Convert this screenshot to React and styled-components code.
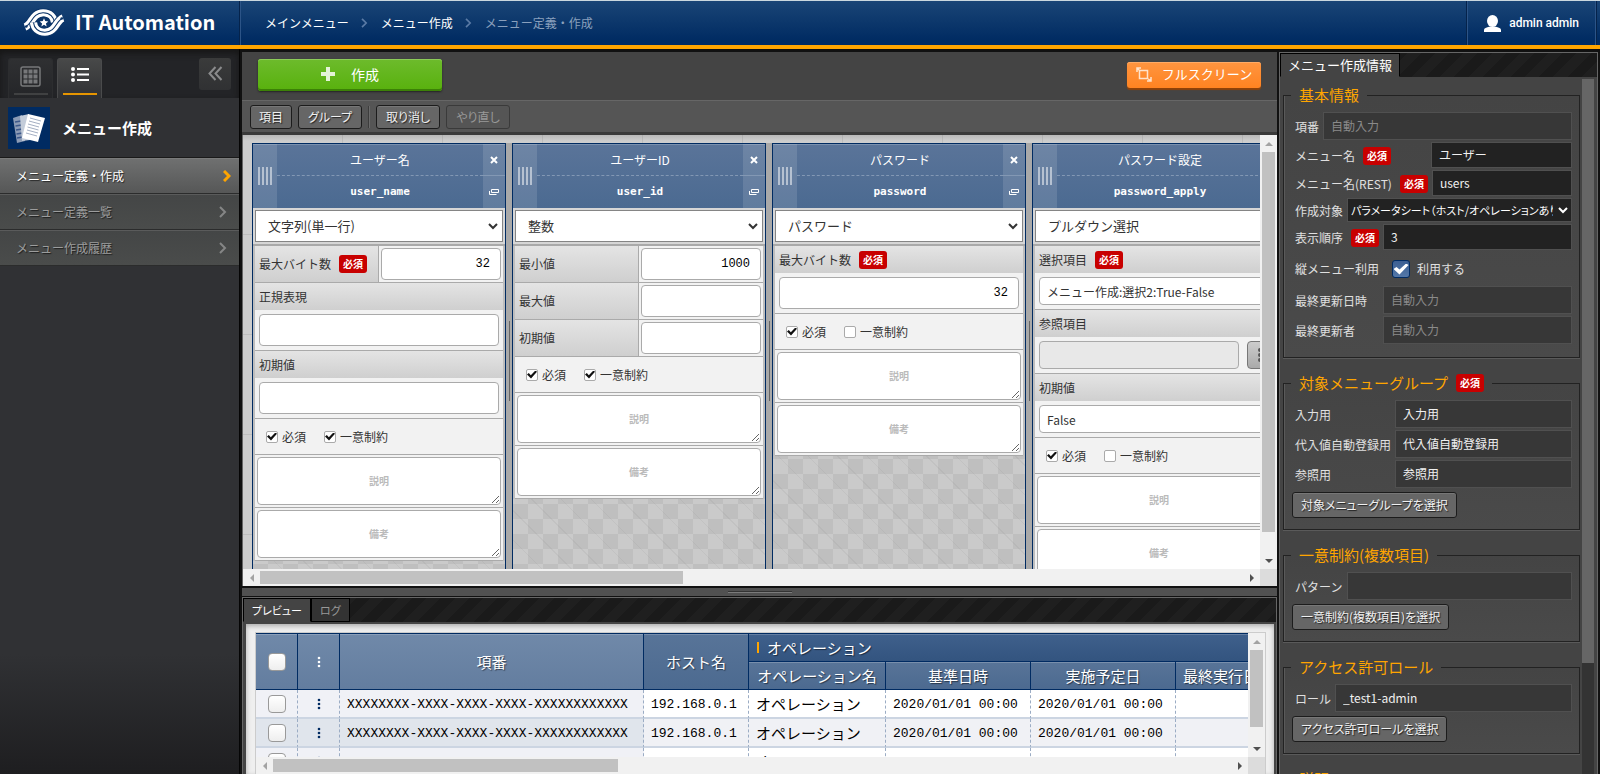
import React from "react";
import styled, { createGlobalStyle, css } from "styled-components";

const ui = `"Noto Sans CJK JP", "Noto Sans", sans-serif`;
const mono = `"Liberation Mono", "Noto Sans CJK JP", monospace`;
const navy = "#002b62";

const GlobalStyle = createGlobalStyle`
  *, *::before, *::after { box-sizing: border-box; }
  html, body, #root { height: 100%; }
  body { margin: 0; overflow: hidden; background: #111; font-family: ${ui}; font-size: 12px; line-height: 16px; color: #333; }
  button, input, select, textarea { font: inherit; color: inherit; margin: 0; border-radius: 0; }
  button { padding: 0; }
  a { color: inherit; text-decoration: none; }
  ul, ol { margin: 0; padding: 0; list-style: none; }
  h1, h2 { margin: 0; font: inherit; }
  svg { display: block; flex: none; }
`;

const Page = styled.div`
  display: flex;
  flex-direction: column;
  height: 100vh;
`;

/* ---------- header ---------- */
const Header = styled.header`
  display: flex;
  flex: none;
  height: 49px;
  border-top: 1px solid #cbd8df;
  border-bottom: 4px solid #ffa500;
  background: linear-gradient(#1a4576, ${navy} 90%);
  color: #fff;
`;
const Brand = styled.h1`
  display: flex;
  align-items: center;
  gap: 10px;
  width: 240px;
  padding: 0 0 2px 23px;
  border-right: 1px solid #05234b;
  font-size: 20px;
  line-height: 28px;
  font-weight: 700;
  white-space: nowrap;
`;
const Crumbs = styled.ol`
  display: flex;
  flex: 1;
  align-items: center;
  gap: 13px;
  padding-left: 24px;
  border-left: 1px solid #2c5487;
  li { display: flex; align-items: center; gap: 12px; }
  li:last-child { color: #8aa0bd; }
`;
const UserArea = styled.div`
  display: flex;
  align-items: center;
  gap: 8px;
  padding: 0 16px;
  margin-right: 4px;
  border-left: 1px solid #2c5487;
  border-right: 1px solid #2c5487;
  box-shadow: -1px 0 #05234b, 1px 0 #05234b;
  font: 500 12px/16px Roboto, sans-serif;
`;
const Body = styled.div`
  display: flex;
  flex: 1;
  min-height: 0;
`;

/* ---------- sidebar ---------- */
const Sidebar = styled.aside`
  flex: none;
  width: 240px;
  background: linear-gradient(#303134 calc(100% - 120px), #1e1e20);
  border-right: 1px solid #050505;
`;
const SideTabs = styled.div`
  display: flex;
  align-items: flex-end;
  gap: 4px;
  height: 49px;
  padding: 0 8px;
  background: #232427;
  box-shadow: inset 0 4px 6px #161616;
`;
const SideTab = styled.button`
  display: flex;
  flex-direction: column;
  align-items: center;
  justify-content: space-between;
  width: 45px;
  height: 40px;
  padding: 7px 0 3px;
  border: 1px solid ${(p) => (p.$on ? "#4a4b4c" : "#2c2d2f")};
  border-bottom: 0;
  border-radius: 3px 3px 0 0;
  background: ${(p) => (p.$on ? "linear-gradient(#484949, #303134)" : "linear-gradient(#2f3032, #242528)")};
  &::after {
    content: "";
    width: 34px;
    height: 2px;
    background: ${(p) => (p.$on ? "#e69500" : "#404142")};
  }
`;
const Collapse = styled.button`
  display: grid;
  place-items: center;
  align-self: center;
  width: 32px;
  height: 32px;
  margin-left: auto;
  border: 0;
  border-radius: 3px;
  background: linear-gradient(#3a3b3b, #303133);
`;
const SideHead = styled.h2`
  display: flex;
  align-items: center;
  gap: 12px;
  height: 60px;
  padding-left: 8px;
  border-bottom: 1px solid #1a1a1a;
  color: #fff;
  font-size: 15px;
  font-weight: 700;
`;
const SideIcon = styled.span`
  display: grid;
  place-items: center;
  width: 42px;
  height: 42px;
  background: ${navy};
`;
const SideLink = styled.a`
  display: flex;
  align-items: center;
  justify-content: space-between;
  height: 36px;
  padding: 0 8px 0 16px;
  border-top: 1px solid ${(p) => (p.$on ? "#7a7b7b" : "#5a5b5b")};
  border-bottom: 1px solid #2b2c2c;
  background: ${(p) => (p.$on ? "linear-gradient(#6f7070, #565757)" : "linear-gradient(#444646, #4a4c4b)")};
  color: ${(p) => (p.$on ? "#fff" : "#9c9d9d")};
  text-shadow: 1px 1px 1px rgba(0, 0, 0, 0.6);
  svg { margin-right: ${(p) => (p.$on ? 0 : 4)}px; }
`;

/* ---------- centre ---------- */
const Main = styled.main`
  display: flex;
  flex: 1;
  flex-direction: column;
  min-width: 0;
  margin: 3px 2px 0;
  background: #444;
`;
const TopBar = styled.div`
  display: flex;
  align-items: center;
  justify-content: space-between;
  flex: none;
  height: 48px;
  padding: 0 16px 2px;
`;
const BigButton = styled.button`
  display: flex;
  align-items: center;
  justify-content: center;
  padding-bottom: 2px;
  border: 0;
  border-radius: 3px;
  color: #fff;
  ${(p) =>
    p.$accent === "green"
      ? css`
          gap: 16px;
          width: 184px;
          height: 32px;
          font-size: 14px;
          background: linear-gradient(#6dbb2c, #58b10d);
          box-shadow: inset 0 1px #8ccc58, inset 0 -2px #3c8107, 0 1px 2px #222;
        `
      : css`
          gap: 10px;
          width: 134px;
          height: 26px;
          font-size: 13px;
          background: linear-gradient(#ff9540, #ff8321);
          box-shadow: inset 0 1px #ffab66, 0 2px 1px #8f4208;
        `}
`;
const Toolbar = styled.div`
  display: flex;
  flex: none;
  align-items: center;
  gap: 6px;
  height: 35px;
  padding: 0 8px;
  border-top: 1px solid #666;
  border-bottom: 3px solid #3a3a3a;
  background: #555;
`;
const GrayButton = styled.button`
  height: ${(p) => (p.$tall ? 26 : 24)}px;
  min-width: ${(p) => (p.$wide ? 64 : 42)}px;
  padding: 0 8px;
  border: 1px solid #1c1c1c;
  border-radius: 3px;
  background: #666;
  box-shadow: inset 0 1px #777;
  color: #f0f0f0;
  font-size: 12px;
  line-height: 16px;
  white-space: nowrap;
  font-feature-settings: "palt";
  text-shadow: 1px 1px 1px #222;
  &:disabled { background: #555; border-color: #3a3a3a; box-shadow: none; color: #999; text-shadow: none; }
`;
const ToolSep = styled.span`
  width: 2px;
  height: 22px;
  border-left: 1px solid #3c3c3c;
  border-right: 1px solid #6a6a6a;
`;

/* ---------- scroll bars ---------- */
const Track = styled.div`
  display: flex;
  align-items: center;
  flex-direction: ${(p) => (p.$vertical ? "column" : "row")};
  min-width: 0;
  min-height: 0;
  background: #f1f1f1;
`;
const Arrow = styled.span`
  display: grid;
  place-items: center;
  flex: none;
  width: 17px;
  height: 17px;
`;
const Rail = styled.span`
  display: flex;
  flex-direction: ${(p) => (p.$vertical ? "column" : "row")};
  flex: 1;
  align-self: stretch;
  padding: ${(p) => (p.$vertical ? "0 2px" : "2px 0")};
`;
const Thumb = styled.span`
  flex: 0 0 ${(p) => p.$size}%;
  background: #c1c1c1;
`;
const Corner = styled.div`background: #dcdcdc;`;
const tri = {
  up: "M4 0L8 4H0z",
  down: "M0 0H8L4 4z",
  left: "M4 0V8L0 4z",
  right: "M0 0L4 4L0 8z",
};
function Tri({ dir, color }) {
  const flat = dir === "up" || dir === "down";
  return (
    <Arrow>
      <svg width={flat ? 8 : 4} height={flat ? 4 : 8} fill={color}><path d={tri[dir]} /></svg>
    </Arrow>
  );
}
function ScrollTrack({ vertical, size }) {
  return (
    <Track $vertical={vertical} aria-hidden="true">
      <Tri dir={vertical ? "up" : "left"} color="#a3a3a3" />
      <Rail $vertical={vertical}><Thumb $size={size} /></Rail>
      <Tri dir={vertical ? "down" : "right"} color="#505050" />
    </Track>
  );
}
const ScrollGrid = styled.div`
  display: grid;
  grid-template: minmax(0, 1fr) 17px / minmax(0, 1fr) 17px;
  flex: 1;
  min-height: 0;
`;
const CanvasFrame = styled(ScrollGrid)`
  border-left: 1px solid #666;
`;

/* ---------- column editor ---------- */
const Canvas = styled.div`
  display: flex;
  overflow: hidden;
  padding: 8px 0 0 9px;
  background:
    linear-gradient(rgba(0, 0, 0, 0.1), transparent 6px),
    repeating-linear-gradient(90deg, transparent 0 99px, #bdbdbd 99px 100px),
    repeating-linear-gradient(transparent 0 99px, #bdbdbd 99px 100px),
    #cdcdcd;
`;
const Column = styled.section`
  display: flex;
  flex-direction: column;
  flex: none;
  width: 254px;
  border: 1px solid ${navy};
  border-bottom: 0;
  background:
    repeating-linear-gradient(45deg, transparent 0 20px, rgba(0, 0, 0, 0.04) 20px 21px),
    conic-gradient(#cacaca 25%, #bfbfbf 0 50%, #cacaca 0 75%, #bfbfbf 0) 0 0 / 30px 30px;
`;
const Resizer = styled.div`
  display: flex;
  justify-content: center;
  flex: 0 0 6px;
  padding-top: 178px;
  background: #a9a9a9;
  &::after { content: ""; width: 1px; height: 80px; background: #666; }
`;
const ColHead = styled.div`
  display: grid;
  grid-template: 32px 32px / 24px 1fr 22px;
  background: linear-gradient(#5a7499, #4b6a91);
  color: #fff;
  text-align: center;
  box-shadow: inset 0 1px #7b91ae;
`;
const Grip = styled.span`
  grid-row: 1 / 3;
  display: flex;
  align-items: center;
  justify-content: center;
  gap: 2px;
  background: rgba(255, 255, 255, 0.12);
  i { width: 2px; height: 18px; background: #b5c1d1; }
`;
const ColTitle = styled.div`
  grid-column: 2;
  display: grid;
  place-items: center;
  font-size: 12px;
  ${(p) => p.$code && css`font: 700 11px/16px "DejaVu Sans Mono", monospace;`}
  ${(p) => !p.$code && css`border-bottom: 1px dashed #8398b4;`}
`;
const ColAction = styled.button`
  grid-column: 3;
  display: grid;
  place-items: center;
  border: 0;
  border-bottom: ${(p) => (p.$line ? "1px solid #8398b4" : "0")};
  background: rgba(255, 255, 255, 0.12);
`;
const SelectBox = styled.div`
  display: grid;
  grid-template-columns: minmax(0, 1fr);
  align-items: center;
  min-width: 0;
  > * { grid-area: 1 / 1; min-width: 0; }
  svg { justify-self: end; margin-right: ${(p) => (p.$dark ? 4 : 5)}px; pointer-events: none; }
`;
const TypeSelectArea = styled.div`
  padding: 2px;
  background: #d6d6d6;
  border-bottom: 2px solid #a9a9a9;
`;
const TypeSelect = styled.select`
  appearance: none;
  width: 100%;
  height: 32px;
  padding: 0 12px;
  border: 1px solid #858585;
  background: #fff;
  color: #333;
  font-size: 13px;
`;
const ColBody = styled.div`
  padding: 0 2px;
  background: #bdbdbd;
`;
const Row = styled.div`
  display: flex;
  border-bottom: 1px solid #aaa;
  background: #f2f2f2;
`;
const LabelCell = styled.label`
  display: flex;
  align-items: center;
  gap: 8px;
  padding-left: 4px;
  background: linear-gradient(#e4e4e4, #cfcfcf);
  color: #333;
  ${(p) => (p.$half ? css`flex: 0 0 124px; border-right: 1px solid #aaa;` : css`height: 27px;`)}
`;
const InputCell = styled.div`
  display: flex;
  flex: 1;
  gap: 8px;
  min-width: 0;
  padding: ${(p) => (p.$half ? "2px" : "4px")};
`;
const TextInput = styled.input`
  flex: 1;
  min-width: 0;
  height: ${(p) => (p.$short ? 28 : 32)}px;
  padding: 0 ${(p) => (p.$short ? 7 : 10)}px;
  border: 1px solid #aaa;
  border-radius: 4px;
  background: ${(p) => (p.readOnly && !p.defaultValue ? "#e8e8e8" : "#fff")};
  color: ${(p) => (p.$short ? "#333" : "#000")};
  font-size: 12px;
  ${(p) => p.$num && css`text-align: right; font-family: ${mono};`}
`;
const PickButton = styled.button`
  display: grid;
  place-items: center;
  width: 32px;
  height: 28px;
  padding-right: 7px;
  border: 1px solid #777;
  border-radius: 4px;
  background: linear-gradient(#ccc, #aaa);
`;
const CheckRow = styled(Row)`
  align-items: center;
  height: 36px;
  gap: 18px;
  padding-left: 11px;
  label { display: flex; align-items: center; gap: 4px; }
`;
const SmallCheck = styled.input`
  appearance: none;
  display: grid;
  place-items: center;
  width: 12px;
  height: 12px;
  border: 1px solid #aaa;
  border-radius: 2px;
  background: #fff;
  &:checked::after {
    content: "";
    width: 10px;
    height: 8px;
    background: #111;
    clip-path: polygon(0 50%, 18% 32%, 38% 58%, 84% 0, 100% 16%, 40% 100%);
  }
`;
const NoteCell = styled(Row)`
  padding: 2px;
`;
const Note = styled.textarea`
  display: block;
  width: 100%;
  height: 48px;
  padding: 16px 0;
  border: 1px solid #aaa;
  border-radius: 4px;
  background: #fff;
  text-align: center;
  font-size: 10px;
  font-weight: 700;
  line-height: 14px;
  resize: vertical;
  &::placeholder { color: #bbb; opacity: 1; }
`;
const Badge = styled.span`
  padding: 0 4px;
  border-radius: 3px;
  background: #c80000;
  color: #fff;
  font-size: 10px;
  font-weight: 700;
  line-height: 18px;
`;

/* ---------- splitter & preview ---------- */
const Splitter = styled.div`
  display: grid;
  place-items: center;
  flex: none;
  height: 11px;
  border-top: 2px solid #111;
  border-bottom: 1px solid #111;
  background: #515151;
  &::after { content: ""; width: 64px; height: 2px; background: #333; border-bottom: 1px solid #7a7a7a; }
`;
const Pane = styled.section`
  display: flex;
  flex-direction: column;
  border: 1px solid #666;
  border-bottom: 0;
  min-height: 0;
  background: #444;
`;
const PreviewPane = styled(Pane)`flex: 0 0 177px;`;
const InfoPane = styled(Pane)`
  flex: none;
  width: 319px;
  margin: 3px 2px 0 0;
`;
const TabBar = styled.div`
  display: flex;
  flex: none;
  height: 24px;
  background: repeating-linear-gradient(135deg, #1a1a1a 0 10px, #1f1f1f 10px 20px);
`;
const Tab = styled.button`
  padding: 0 ${(p) => (p.$wide ? 7 : 8)}px;
  border: 1px solid #000;
  border-bottom-color: ${(p) => (p.$on ? "#444" : "#000")};
  background: ${(p) => (p.$on ? "#444" : "#333")};
  color: ${(p) => (p.$on ? "#fff" : "#999")};
  font-size: ${(p) => (p.$wide ? 13 : 11)}px;
  ${(p) => !p.$wide && css`font-feature-settings: "palt";`}
`;
const PreviewBody = styled.div`
  display: flex;
  flex: 1;
  min-height: 0;
  margin: 2px 2px 0 3px;
  padding: 8px 8px 0 9px;
  background: #efefef;
  box-shadow: inset 0 2px 5px #aaa;
`;
const PreviewFrame = styled(ScrollGrid)`
  border: 1px solid #ccc;
  border-bottom: 0;
`;
const Clip = styled.div`
  overflow: hidden;
`;
const Table = styled.table`
  width: 1025px;
  table-layout: fixed;
  border-collapse: separate;
  border-spacing: 0;
  font-size: 15px;
  line-height: 20px;
  color: #000;
  white-space: nowrap;
`;
const Th = styled.th`
  height: ${(p) => (p.$top ? 29 : 28)}px;
  padding: 0 7px;
  border-right: 1px solid ${navy};
  border-bottom: 1px solid ${navy};
  background: ${(p) => ({ light: "linear-gradient(#7089a9, #637d9f)", group: "linear-gradient(#3f608c, #33547f)" }[p.$kind] || "linear-gradient(#587498, #4c6a90)")};
  box-shadow: inset 0 1px rgba(255, 255, 255, 0.2);
  color: #fff;
  font-weight: 400;
  text-align: ${(p) => (p.$kind === "group" ? "left" : "center")};
  text-shadow: 1px 1px 1px rgba(0, 0, 0, 0.5);
  overflow: hidden;
  ${(p) => p.$top && css`border-top: 1px solid ${navy};`}
  svg { margin: 0 auto; }
`;
const GroupName = styled.span`
  display: flex;
  align-items: center;
  gap: 8px;
  padding-left: 1px;
  &::before { content: ""; width: 2px; height: 11px; background: #ffa500; }
`;
const Td = styled.td`
  height: 29px;
  padding: 0 7px;
  border-right: 1px dashed #9bacc4;
  border-bottom: 2px solid #ccd5e2;
  background: ${(p) => (p.$fixed ? (p.$even ? "#e0e5ec" : "#f0f1f6") : p.$even ? "#f0f1f5" : "#fff")};
  ${(p) => p.$code && css`padding-top: 3px; font: 13px/16px ${mono};`}
  svg { margin: 0 auto; }
`;
const TableCheck = styled.input`
  appearance: none;
  display: block;
  width: 18px;
  height: 18px;
  margin: 0 auto;
  border: 1px solid #999;
  border-radius: 4px;
  background: linear-gradient(#fff, #eee);
`;

/* ---------- info pane ---------- */
const InfoBody = styled.div`
  display: flex;
  flex: 1;
  min-height: 0;
  padding-right: 3px;
`;
const InfoScroll = styled.div`
  flex: 1;
  min-width: 0;
  overflow: hidden;
  padding: 7px 2px 0 3px;
`;
const DarkTrack = styled.div`
  flex: 0 0 12px;
  margin-top: 2px;
  background: #333;
  &::before { content: ""; display: block; height: 84%; background: #666; }
`;
const Fieldset = styled.fieldset`
  min-width: 0;
  margin: 0 0 14px;
  padding: 6px 7px 11px 11px;
  border: 1px solid #222;
  background: linear-gradient(#444, #4a4a4a);
  box-shadow: inset 1px 0 #5a5a5a, 0 1px #5a5a5a;
`;
const Legend = styled.legend`
  display: flex;
  align-items: center;
  gap: 8px;
  height: 22px;
  margin-left: -4px;
  padding: 0 8px;
  color: #ffa500;
  font-size: 15px;
  line-height: 22px;
`;
const Field = styled.div`
  display: flex;
  align-items: center;
  height: ${(p) => p.$h || 30}px;
  color: #e0e0e0;
`;
const FieldLabel = styled.label`
  display: flex;
  align-items: center;
  justify-content: ${(p) => (p.$spread ? "space-between" : "flex-start")};
  gap: 8px;
  flex: 0 0 ${(p) => p.$w}px;
  padding-right: 4px;
  white-space: nowrap;
`;
const DarkInput = styled.input`
  flex: 1;
  align-self: stretch;
  min-width: 0;
  margin-bottom: 2px;
  padding: 0 7px;
  border: 1px solid #505050;
  background: ${(p) => (p.readOnly ? "#373737" : "#222")};
  color: #f0f0f0;
  &::placeholder { color: #8a8a8a; opacity: 1; }
`;
const DarkSelectBox = styled(SelectBox)`
  flex: 1;
  align-self: stretch;
  margin-bottom: 2px;
`;
const DarkSelect = styled.select`
  appearance: none;
  height: 100%;
  padding: 0 18px 0 3px;
  border: 1px solid #505050;
  background: #222;
  color: #fff;
  font-size: 11px;
  font-feature-settings: "palt";
`;
const BlueCheck = styled.input`
  appearance: none;
  display: grid;
  place-items: center;
  width: 18px;
  height: 18px;
  margin: 0 7px 0 0;
  border: 1px solid ${navy};
  border-radius: 3px;
  background: linear-gradient(#3c5f92, #5377a8);
  &:checked::after {
    content: "";
    width: 15px;
    height: 11px;
    background: #fff;
    clip-path: polygon(0 50%, 20% 32%, 40% 55%, 84% 0, 100% 14%, 40% 100%);
  }
`;
const Pick = styled(GrayButton)`
  display: block;
  margin: 2px 0 0 -3px;
`;

/* ---------- icons ---------- */
const Chevron = ({ color, size = 12, w = 2 }) => (
  <svg width={size / 2 + 2} height={size} viewBox="0 0 8 12" fill="none" stroke={color} strokeWidth={w}><path d="M1 1l5 5-5 5" /></svg>
);
const Down = ({ color }) => (
  <svg width="10" height="7" fill="none" stroke={color} strokeWidth="2"><path d="M1 1l4 4 4-4" /></svg>
);
const swoosh = "M2 19C9 16.500 9 5 20 4.800C27 4.700 31 9 31.500 14.500";
const Swoosh = ({ turn }) => (
  <g fill="none" transform={turn ? "rotate(180 21 14.500)" : undefined}>
    <path d={swoosh} stroke="#0c3569" strokeWidth="9" />
    <path d={swoosh} stroke="#fff" strokeWidth="7.200" />
    <path d={swoosh} stroke="#0c3569" strokeWidth="1.100" />
    <circle cx="3.300" cy="18.500" r="1.300" fill="#0c3569" />
  </g>
);
const Logo = () => (
  <svg width="42" height="29" viewBox="0 0 42 29">
    <Swoosh />
    <Swoosh turn />
    <circle cx="21" cy="14.500" r="6" fill="#0c3569" />
    <path d="M21 10.200l1.200 2.900 3.100.3-2.400 2 .8 3-2.700-1.600-2.700 1.600.8-3-2.400-2 3.100-.3z" fill="#fff" />
  </svg>
);
const Person = () => (
  <svg width="17" height="17" fill="#fff"><ellipse cx="8.500" cy="6" rx="5.500" ry="6" /><path d="M0 17v-2c0-2 2-2.600 6-3.600h5c4 1 6 1.600 6 3.600v2z" /></svg>
);
const GridIcon = () => (
  <svg width="21" height="21" fill="none" stroke="#77787a"><rect x="1" y="1" width="19" height="19" rx="2" strokeWidth="1.500" /><g fill="#77787a" stroke="none">{[3, 8, 13].map((y) => [3, 8, 13].map((x) => <rect key={x + "-" + y} x={x + 0.5} y={y + 0.5} width="4" height="4" />))}</g></svg>
);
const ListIcon = () => (
  <svg width="18" height="17" fill="#fff"><circle cx="2" cy="3" r="2" /><circle cx="2" cy="8.500" r="2" /><circle cx="2" cy="14" r="2" /><path d="M6 2h12v2H6zM6 7.500h12v2H6zM6 13h12v2H6z" /></svg>
);
const Sheets = () => (
  <svg width="34" height="32" viewBox="0 0 34 32">
    <path d="M1 6l9-3 3 26-8 2z" fill="#8b9bb5" />
    <path d="M3 10l6-1M3.500 14l6-1M4 18l6-1M4.500 22l6-1M5 26l6-1" stroke="#3c588a" strokeWidth="1.500" />
    <path d="M8 4l9-2 1 26-8 1z" fill="#c3ccd9" />
    <path d="M16 2l17 4-7 24-16-4z" fill="#fff" />
    <path d="M18 6l11 3M17 9l11 3M16 12l11 3M15.500 15l11 3M15 18l11 3M14 21l11 3" stroke="#a4afc3" strokeWidth="1" />
  </svg>
);
const DoubleLeft = () => (
  <svg width="15" height="15" fill="none" stroke="#8a8b8c" strokeWidth="2"><path d="M7.500 1l-6 6.500 6 6.500M13.500 1l-6 6.500 6 6.500" /></svg>
);
const Plus = () => <svg width="14" height="14" fill="#e4f3d8"><path d="M5 0h4v5h5v4H9v5H5V9H0V5h5z" /></svg>;
const Expand = () => (
  <svg width="16" height="15" fill="none" stroke="#ffe3cc" strokeWidth="1.500"><path d="M3.500 3.500h8v8h-8zM1 5V1h4M15 10v4h-4M1 1l3 3M15 14l-4-3" /></svg>
);
const Close = () => <svg width="8" height="8" fill="none" stroke="#fff" strokeWidth="2"><path d="M1 1l6 6M7 1L1 7" /></svg>;
const Copy = () => <svg width="10" height="6" fill="none" stroke="#fff"><path d="M2.500 .5h7v3h-7zM.5 2v3.500h7" /></svg>;
const Dots = ({ color, r = 1.300 }) => (
  <svg width="4" height="12" fill={color}><circle cx="2" cy="2" r={r} /><circle cx="2" cy="6" r={r} /><circle cx="2" cy="10" r={r} /></svg>
);
const BigDots = () => (
  <svg width="4" height="14" fill="#555"><circle cx="2" cy="2" r="2" /><circle cx="2" cy="7" r="2" /><circle cx="2" cy="12" r="2" /></svg>
);

/* ---------- data ---------- */
const columns = [
  {
    title: "ユーザー名", code: "user_name", type: "文字列(単一行)", unique: true,
    fields: [
      { label: "最大バイト数", half: true, must: true, value: "32", num: true },
      { label: "正規表現" },
      { label: "初期値" },
    ],
  },
  {
    title: "ユーザーID", code: "user_id", type: "整数", unique: true,
    fields: [
      { label: "最小値", half: true, value: "1000", num: true },
      { label: "最大値", half: true },
      { label: "初期値", half: true },
    ],
  },
  {
    title: "パスワード", code: "password", type: "パスワード",
    fields: [{ label: "最大バイト数", must: true, value: "32", num: true }],
  },
  {
    title: "パスワード設定", code: "password_apply", type: "プルダウン選択",
    fields: [
      { label: "選択項目", must: true, value: "メニュー作成:選択2:True-False", short: true },
      { label: "参照項目", short: true, pick: true },
      { label: "初期値", value: "False", short: true },
    ],
  },
];

function ColumnCard({ col }) {
  return (
    <>
      <Column>
        <ColHead>
          <Grip><i /><i /><i /><i /></Grip>
          <ColTitle>{col.title}</ColTitle>
          <ColAction $line aria-label="削除"><Close /></ColAction>
          <ColTitle $code>{col.code}</ColTitle>
          <ColAction aria-label="複製"><Copy /></ColAction>
        </ColHead>
        <TypeSelectArea>
          <SelectBox>
            <TypeSelect aria-label={col.title}><option>{col.type}</option></TypeSelect>
            <Down color="#333" />
          </SelectBox>
        </TypeSelectArea>
        <ColBody>
          {col.fields.map((f, i) => {
            const id = `${col.code}-${i}`;
            const label = <LabelCell $half={f.half} htmlFor={id}>{f.label}{f.must && <Badge>必須</Badge>}</LabelCell>;
            const input = (
              <InputCell $half={f.half}>
                <TextInput id={id} $short={f.short} $num={f.num} defaultValue={f.value} readOnly={f.pick} />
                {f.pick && <PickButton aria-label={f.label}><BigDots /></PickButton>}
              </InputCell>
            );
            return f.half ? <Row key={id}>{label}{input}</Row> : (
              <React.Fragment key={id}>{label}<Row>{input}</Row></React.Fragment>
            );
          })}
          <CheckRow>
            <label><SmallCheck type="checkbox" defaultChecked />必須</label>
            <label><SmallCheck type="checkbox" defaultChecked={col.unique} />一意制約</label>
          </CheckRow>
          <NoteCell><Note placeholder="説明" aria-label="説明" /></NoteCell>
          <NoteCell><Note placeholder="備考" aria-label="備考" /></NoteCell>
        </ColBody>
      </Column>
      <Resizer />
    </>
  );
}

function DarkField({ label, w, h, must, value, hint, locked, spread }) {
  const id = `info-${label}`;
  return (
    <Field $h={h}>
      <FieldLabel $w={w} $spread={spread} htmlFor={id}>{label}{must && <Badge>必須</Badge>}</FieldLabel>
      <DarkInput id={id} defaultValue={value} placeholder={hint} readOnly={locked} />
    </Field>
  );
}

const uuid = "XXXXXXXX-XXXX-XXXX-XXXX-XXXXXXXXXXXX";

export default function App() {
  return (
    <Page>
      <GlobalStyle />
      <Header>
        <Brand><Logo />IT Automation</Brand>
        <Crumbs>
          <li><a href="#main">メインメニュー</a><Chevron color="#5b7ba6" size={10} /></li>
          <li><a href="#create">メニュー作成</a><Chevron color="#5b7ba6" size={10} /></li>
          <li>メニュー定義・作成</li>
        </Crumbs>
        <UserArea><Person />admin admin</UserArea>
      </Header>
      <Body>
        <Sidebar>
          <SideTabs>
            <SideTab aria-label="グリッド"><GridIcon /></SideTab>
            <SideTab $on aria-label="リスト"><ListIcon /></SideTab>
            <Collapse aria-label="閉じる"><DoubleLeft /></Collapse>
          </SideTabs>
          <SideHead><SideIcon><Sheets /></SideIcon>メニュー作成</SideHead>
          <nav>
            <SideLink $on href="#define">メニュー定義・作成<Chevron color="#ffa500" w={3} /></SideLink>
            <SideLink href="#list">メニュー定義一覧<Chevron color="#858686" /></SideLink>
            <SideLink href="#history">メニュー作成履歴<Chevron color="#858686" /></SideLink>
          </nav>
        </Sidebar>
        <Main>
          <TopBar>
            <BigButton $accent="green"><Plus />作成</BigButton>
            <BigButton><Expand />フルスクリーン</BigButton>
          </TopBar>
          <Toolbar>
            <GrayButton>項目</GrayButton>
            <GrayButton $wide>グループ</GrayButton>
            <ToolSep />
            <GrayButton $wide>取り消し</GrayButton>
            <GrayButton $wide disabled>やり直し</GrayButton>
          </Toolbar>
          <CanvasFrame>
            <Canvas>{columns.map((c) => <ColumnCard key={c.code} col={c} />)}</Canvas>
            <ScrollTrack vertical size={95} />
            <ScrollTrack size={43} />
            <Corner />
          </CanvasFrame>
          <Splitter />
          <PreviewPane>
            <TabBar>
              <Tab $on>プレビュー</Tab>
              <Tab>ログ</Tab>
            </TabBar>
            <PreviewBody>
              <PreviewFrame>
                <Clip>
                  <Table>
                    <colgroup>
                      {[42, 42, 304, 105, 137, 145, 145, 105].map((w, i) => <col key={i} width={w} />)}
                    </colgroup>
                    <thead>
                      <tr>
                        <Th $top rowSpan={2} $kind="light"><TableCheck type="checkbox" aria-label="すべて選択" /></Th>
                        <Th $top rowSpan={2} $kind="light"><Dots color="#fff" /></Th>
                        <Th $top rowSpan={2} $kind="light">項番</Th>
                        <Th $top rowSpan={2}>ホスト名</Th>
                        <Th $top colSpan={4} $kind="group"><GroupName>オペレーション</GroupName></Th>
                      </tr>
                      <tr><Th>オペレーション名</Th><Th>基準日時</Th><Th>実施予定日</Th><Th>最終実行日時</Th></tr>
                    </thead>
                    <tbody>
                      {[0, 1, 2].map((n) => {
                        const even = n % 2 === 1;
                        return (
                          <tr key={n}>
                            <Td $fixed $even={even}><TableCheck type="checkbox" aria-label={`行 ${n + 1}`} /></Td>
                            <Td $fixed $even={even}><Dots color={navy} /></Td>
                            <Td $fixed $even={even} $code>{uuid}</Td>
                            <Td $even={even} $code>192.168.0.1</Td>
                            <Td $even={even}>オペレーション</Td>
                            <Td $even={even} $code>2020/01/01 00:00</Td>
                            <Td $even={even} $code>2020/01/01 00:00</Td>
                            <Td $even={even} />
                          </tr>
                        );
                      })}
                    </tbody>
                  </Table>
                </Clip>
                <ScrollTrack vertical size={86} />
                <ScrollTrack size={36} />
                <Corner />
              </PreviewFrame>
            </PreviewBody>
          </PreviewPane>
        </Main>
        <InfoPane>
          <TabBar><Tab $on $wide>メニュー作成情報</Tab></TabBar>
          <InfoBody>
            <InfoScroll>
              <Fieldset>
                <Legend>基本情報</Legend>
                <DarkField label="項番" w={28} hint="自動入力" locked />
                <DarkField label="メニュー名" w={136} h={28} must value="ユーザー" />
                <DarkField label="メニュー名(REST)" w={136} h={28} must spread value="users" />
                <Field $h={26}>
                  <FieldLabel $w={52} htmlFor="target">作成対象</FieldLabel>
                  <DarkSelectBox $dark>
                    <DarkSelect id="target"><option>パラメータシート（ホスト/オペレーションあり）</option></DarkSelect>
                    <Down color="#fff" />
                  </DarkSelectBox>
                </Field>
                <DarkField label="表示順序" w={88} h={28} must value="3" />
                <Field $h={34}>
                  <FieldLabel $w={97} htmlFor="vertical">縦メニュー利用</FieldLabel>
                  <BlueCheck id="vertical" type="checkbox" defaultChecked />
                  <label htmlFor="vertical">利用する</label>
                </Field>
                <DarkField label="最終更新日時" w={88} hint="自動入力" locked />
                <DarkField label="最終更新者" w={88} hint="自動入力" locked />
              </Fieldset>
              <Fieldset>
                <Legend>対象メニューグループ<Badge>必須</Badge></Legend>
                <DarkField label="入力用" w={100} value="入力用" locked />
                <DarkField label="代入値自動登録用" w={100} value="代入値自動登録用" locked />
                <DarkField label="参照用" w={100} value="参照用" locked />
                <Pick $tall>対象メニューグループを選択</Pick>
              </Fieldset>
              <Fieldset>
                <Legend>一意制約(複数項目)</Legend>
                <DarkField label="パターン" w={52} locked />
                <Pick $tall>一意制約(複数項目)を選択</Pick>
              </Fieldset>
              <Fieldset>
                <Legend>アクセス許可ロール</Legend>
                <DarkField label="ロール" w={40} value="_test1-admin" locked />
                <Pick $tall>アクセス許可ロールを選択</Pick>
              </Fieldset>
              <Fieldset>
                <Legend>説明</Legend>
              </Fieldset>
            </InfoScroll>
            <DarkTrack aria-hidden="true" />
          </InfoBody>
        </InfoPane>
      </Body>
    </Page>
  );
}
